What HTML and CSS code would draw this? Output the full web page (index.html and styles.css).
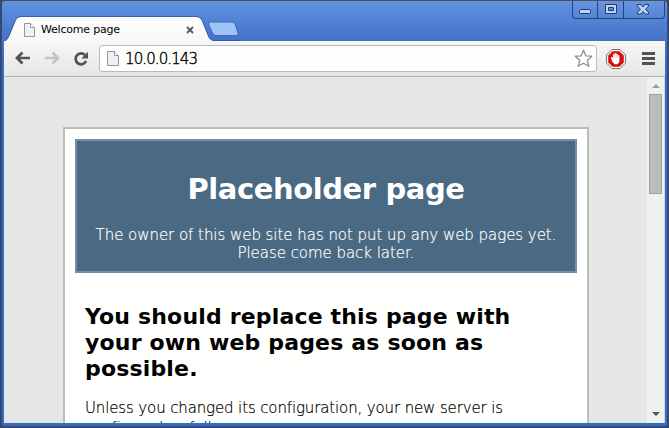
FILE: index.html
```html
<!DOCTYPE html>
<html lang="en">
<head>
<meta charset="utf-8">
<title>Welcome page</title>
<link rel="stylesheet" href="styles.css">
</head>
<body>
<div class="window">
  <header class="titlebar">
    <div class="tab">
      <svg class="tab-shape" width="236" height="26" viewBox="0 0 236 26">
        <defs><linearGradient id="tabfill" x1="0" y1="0" x2="0" y2="1"><stop offset="0" stop-color="#fefffd"/><stop offset="1" stop-color="#f7f8f6"/></linearGradient></defs>
        <path d="M1 26V25.500Q3.500 24 5 21L12 4Q13.500 1 17 1H192Q196 1 198 5L204 20Q206 24.500 210 25V26Z" fill="url(#tabfill)"/>
        <path d="M0 25Q3 23.500 4.500 20.500L11.500 4Q13 .5 17 .5H192Q196.500 .5 198.500 5L204.500 20Q206 24.500 210 24.500H236" fill="none" stroke="#2e559f" stroke-opacity=".75"/>
      </svg>
      <svg class="tab-doc" width="11" height="14" viewBox="0 0 11 14"><path d="M.5.5H6.500L10.500 4.500V13.500H.5Z" fill="#edf2f8" stroke="#939896"/><path d="M6.500.5V4.500H10.500" fill="#fff" stroke="#939896"/></svg>
      <span class="tab-title">Welcome page</span>
      <svg class="tab-close" width="8" height="8" viewBox="0 0 8 8"><path d="M1 1L7 7M7 1L1 7" stroke="#555856" stroke-width="1.800"/></svg>
    </div>
    <svg class="new-tab" width="33" height="16" viewBox="0 0 33 16"><path d="M3 1H24Q27 1 28 3L31 12Q31.500 14.500 29.500 14.500H9Q6.500 14.500 5.500 12L1.500 3Q1 1 3 1Z" fill="#9fc3f5" stroke="#386bc0"/></svg>
    <div class="controls">
      <span class="control minimize"><svg width="13" height="6" viewBox="0 0 13 6"><rect x=".5" y=".5" width="11" height="4" rx="1" fill="#b9d2f8" stroke="#233b6b"/></svg></span>
      <span class="control maximize"><svg width="12" height="11" viewBox="0 0 12 11"><path d="M.5.5H11.500V9.500H.5ZM3.500 3.500V6.500H8.500V3.500Z" fill="#b9d2f8" fill-rule="evenodd" stroke="#233b6b"/></svg></span>
      <span class="control close"><svg width="12" height="11" viewBox="0 0 12 11"><path d="M.5.5H4L6 3L8 .5H11.500V2L8.500 5.500L11.500 8V10H8L6 7.500L4 10H.5V8L3.500 5.500L.5 2Z" fill="#b9d2f8" stroke="#233b6b"/></svg></span>
    </div>
  </header>
  <nav class="toolbar">
    <svg class="back" width="16" height="14" viewBox="0 0 16 14"><path d="M7.500 1.500L2 7L7.500 12.500M2.500 7H15" fill="none" stroke="#505351" stroke-width="2.700"/></svg>
    <svg class="forward" width="16" height="14" viewBox="0 0 16 14"><path d="M8.500 1.500L14 7L8.500 12.500M13.500 7H1" fill="none" stroke="#c2c4c2" stroke-width="2.700"/></svg>
    <svg class="reload" width="16" height="16" viewBox="0 0 16 16"><path d="M12 4.200A5.400 5.400 0 1 0 13 10" fill="none" stroke="#505351" stroke-width="2.700"/><path d="M15 .8V7.500H8.300Z" fill="#505351"/></svg>
    <div class="address">
      <svg class="doc" width="12" height="15" viewBox="0 0 12 15"><path d="M.5.5H7.500L11.500 4.500V14.500H.5Z" fill="#edf0f5" stroke="#939896"/><path d="M7.500.5V4.500H11.500" fill="#fff" stroke="#939896"/></svg>
      <span class="url">10.0.0.143</span>
      <svg class="star" width="19" height="19" viewBox="0 0 19 19"><path d="M9.500 1.200L11.900 6.900L17.800 7.200L13.300 11.200L14.800 17.300L9.500 14.200L4.200 17.300L5.700 11.200L1.200 7.200L7.100 6.900Z" fill="#fff" stroke="#8c908d" stroke-width="1.300" stroke-linejoin="round"/></svg>
    </div>
    <svg class="blocker" width="20" height="20" viewBox="0 0 20 20"><path d="M6 .5H14L19.500 6V14L14 19.500H6L.5 14V6Z" fill="#f8f8f7" stroke="#777"/><path d="M6.600 2.200H13.400L17.800 6.600V13.400L13.400 17.800H6.600L2.200 13.400V6.600Z" fill="#dc0e0b"/><path d="M6 12L5 9Q4.700 7.800 6 8L7 9V5.500Q7.700 4.700 8.400 5.500V4.500Q9.200 3.500 10 4.500V5Q11 4 11.700 5.200V6.500Q12.600 5.500 13.400 6.700V12Q13.200 15 11 15.300H9Q7.300 15 6 12Z" fill="#fff"/><path d="M8.500 5V9M10.200 5V9M11.900 6V9" stroke="#e8a5a3" stroke-width=".5"/></svg>
    <svg class="menu" width="13" height="13" viewBox="0 0 13 13"><path d="M0 1.500H13M0 6.500H13M0 11.500H13" stroke="#505351" stroke-width="2.800"/></svg>
  </nav>
  <div class="viewport">
    <main class="page">
      <article class="card">
        <section class="banner">
          <h1>Placeholder page</h1>
          <p>The owner of this web site has not put up any web pages yet.<br>Please come back later.</p>
        </section>
        <section class="body">
          <h2>You should replace this page with<br>your own web pages as soon as<br>possible.</h2>
          <p>Unless you changed its configuration, your new server is<br>configured as follows:</p>
        </section>
      </article>
    </main>
    <aside class="scrollbar">
      <svg class="up" width="8" height="4" viewBox="0 0 8 4"><path d="M0 4L4 0L8 4Z" fill="#9c9f9d"/></svg>
      <div class="thumb"></div>
      <svg class="down" width="8" height="4" viewBox="0 0 8 4"><path d="M0 0H8L4 4Z" fill="#505351"/></svg>
    </aside>
  </div>
</div>
</body>
</html>
```
FILE: styles.css
```css
* { box-sizing: border-box; }
html, body { margin: 0; height: 100%; overflow: hidden; }
body { background: #44484e; font-family: "DejaVu Sans", sans-serif; }
svg { display: block; flex: none; }
.window {
  width: 667px; height: 427px; display: flex; flex-direction: column;
  margin-left: 1px; padding: 0 2px 3px 2px;
  border: 1px solid #244c99; border-top-color: #4a5058; border-radius: 4px 4px 2px 2px;
  background: linear-gradient(#6194df 0, #4774cb 36px, #376cc4 60px);
}
.titlebar { height: 40px; flex: none; display: flex; align-items: flex-start; }
.tab { display: grid; grid-template-columns: 20px 17px 145px 1fr; width: 203px; height: 29px; margin-top: 15px; align-items: center; }
.tab-shape { grid-area: 1 / 1; align-self: start; overflow: visible; }
.tab-doc { grid-area: 1 / 2; margin-top: -1px; }
.tab-title { grid-area: 1 / 3; font-size: 11px; line-height: 14px; white-space: nowrap; margin-top: -2px; color: #000; letter-spacing: -.2px; }
.tab-close { grid-area: 1 / 4; margin-top: -2px; }
.new-tab { margin-top: 20px; }
.controls { display: flex; width: 93px; height: 18px; margin-left: auto; border: 1px solid #24427c; border-top: 0; border-radius: 0 0 4px 4px; background: linear-gradient(#6795e2, #5684d5); }
.control { display: flex; align-items: center; justify-content: center; width: 25px; border-right: 1px solid #24427c; }
.minimize { align-items: flex-end; padding-bottom: 3px; }
.maximize { width: 26px; }
.close { flex: 1; padding-right: 3px; border: 0; }
.toolbar { height: 36px; flex: none; display: flex; align-items: center; padding: 0 10px 0 11px; background: linear-gradient(#f7f8f6, #e5e7e4); border-bottom: 1px solid #afb2b0; }
.back { margin-top: -1px; }
.forward { margin: -1px 0 0 13px; }
.reload { margin-left: 13px; }
.address { flex: 1; height: 27px; display: flex; align-items: center; margin: 0 9px 0 10px; padding: 0 3px 0 7px; border: 1px solid #b8bbb9; border-radius: 3px; background: #fefffd; }
.url { font-size: 15px; margin-left: 6px; line-height: 20px; font-weight: 200; letter-spacing: -.9px; -webkit-text-stroke: .4px #000; }
.star { margin-left: auto; }
.menu { margin-left: 16px; }
.viewport { flex: 1; min-height: 0; display: flex; overflow: hidden; background: #e5e7e4; }
.page { flex: 1; padding: 50px 58px 0 59px; overflow: hidden; }
.card { height: 500px; padding: 10px; border: 2px solid #bbbdbb; background: #fffffe; }
.banner { height: 134px; border: 2px solid #738fae; background: #4a6983; color: #fff; text-align: center; }
h1 { margin: 30px 0 0; font-size: 29px; line-height: 36px; letter-spacing: -.42px; }
.banner p { margin: 19px -10px 0; font-size: 15px; line-height: 18px; white-space: nowrap; font-weight: 200; letter-spacing: -.04px; -webkit-text-stroke: .2px #fff; }
.body { padding: 31px 10px 0; white-space: nowrap; }
h2 { margin: 0; font-size: 22px; line-height: 26px; letter-spacing: .17px; }
.body p { margin: 16px 0 0; font-size: 15px; line-height: 20px; font-weight: 200; letter-spacing: -.13px; -webkit-text-stroke: .2px #000; }
.scrollbar { width: 18px; display: flex; flex-direction: column; align-items: center; background: #eff1ee; border-right: 1px solid #d5d8d6; padding: 7px 2px 7px; }
.thumb { width: 13px; height: 100px; margin-top: 6px; background: #bbbdbb; border: 1px solid #9fa19f; }
.down { margin-top: auto; }
```
